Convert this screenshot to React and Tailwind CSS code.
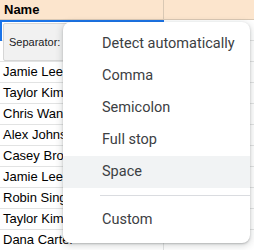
import React from "react";

const names = [
  "Jamie Lee",
  "Taylor Kim",
  "Chris Wang",
  "Alex Johnson",
  "Casey Brown",
  "Jamie Lee",
  "Robin Singh",
  "Taylor Kim",
  "Dana Carter",
];

const options = ["Detect automatically", "Comma", "Semicolon", "Full stop", "Space"];

const Row = ({ children, h = "h-[21px]" }) => (
  <div className={`flex ${h} border-b border-[#e2e3e3]`}>
    <div className="w-[164px] shrink-0 border-r border-[#e2e3e3] pl-[3px] flex items-center text-[13px] text-black whitespace-nowrap overflow-hidden">
      {children}
    </div>
    <div className="flex-1" />
  </div>
);

export default function App() {
  return (
    <div
      className="relative w-[254px] h-[250px] overflow-hidden bg-white"
      style={{ fontFamily: '"Liberation Sans", Arial, sans-serif' }}
    >
      {/* Header */}
      <div className="flex h-[20px] bg-[#fce5cd] border-b border-[#d9c8b4]">
        <div className="w-[164px] shrink-0 border-r border-[#d9c8b4] pl-[4px] flex items-center text-[13px] font-bold text-black">
          Name
        </div>
        <div className="flex-1" />
      </div>

      {/* Rows */}
      <Row h="h-[21px]" />
      <Row h="h-[21px]" />
      {names.map((n, i) => (
        <Row key={i}>{n}</Row>
      ))}

      {/* Selected cell outline */}
      <div className="absolute left-0 top-[20px] w-[164px] h-[21px] border-t-2 border-l-2 border-[#1a73e8]" />

      {/* Separator chip */}
      <div className="absolute left-[3px] top-[23px] w-[120px] h-[38px] bg-[#f1f1f1] border border-[#d6d6d6] rounded-[2px] flex items-center pl-[5px] text-[11px] text-[#202124]">
        Separator:
      </div>

      {/* Dropdown menu */}
      <div
        className="absolute left-[63px] top-[22px] w-[187px] bg-white rounded-lg pt-[6px] pb-[7px] shadow-[0_2px_6px_2px_rgba(60,64,67,0.15),0_1px_2px_0_rgba(60,64,67,0.3)]"
        style={{ fontFamily: 'Roboto, "Liberation Sans", sans-serif' }}
      >
        {options.map((o) => (
          <div
            key={o}
            className={`h-[32px] flex items-center pl-[39px] text-[14.5px] text-[#3c4043] ${
              o === "Space" ? "bg-[#f1f3f4]" : ""
            }`}
          >
            {o}
          </div>
        ))}
        <div className="ml-[37px] mt-[7px] mb-[8px] border-t border-[#dadce0]" />
        <div className="h-[32px] flex items-center pl-[39px] text-[14.5px] text-[#3c4043]">Custom</div>
      </div>
    </div>
  );
}
